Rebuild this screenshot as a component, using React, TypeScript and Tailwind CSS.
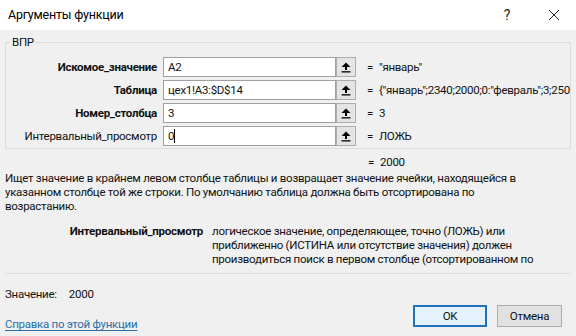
import React from "react";

const font = { fontFamily: 'Roboto, "Noto Sans", sans-serif' };

function RefIcon() {
  return (
    <svg width="10" height="11" viewBox="0 0 10 11">
      <polygon points="5,0.5 9.5,5 6,5 6,8 4,8 4,5 0.5,5" fill="#000" />
      <rect x="0.5" y="9.2" width="9" height="1.3" fill="#000" />
    </svg>
  );
}

function ArgRow({
  label,
  bold,
  value,
  result,
  cursor,
}: {
  label: string;
  bold?: boolean;
  value: string;
  result: string;
  cursor?: boolean;
}) {
  return (
    <div className="flex items-center h-[20px]">
      <div
        className={`w-[151px] text-right whitespace-nowrap ${bold ? "font-bold" : ""}`}
      >
        {label}
      </div>
      <div className="ml-[6px] w-[173px] h-[20px] border border-[#a0a0a0] bg-white flex items-center pl-[4px] whitespace-nowrap overflow-hidden">
        <span>{value}</span>
        {cursor && <span className="inline-block w-[1px] h-[14px] bg-black" />}
      </div>
      <div className="w-[20px] h-[20px] border border-[#adadad] bg-[#e4e4e4] flex items-center justify-center">
        <RefIcon />
      </div>
      <div className="ml-[11px] w-[8px]">=</div>
      <div className="ml-[4px] flex-1 min-w-0 whitespace-nowrap overflow-hidden">{result}</div>
    </div>
  );
}

export default function App() {
  return (
    <div
      className="w-[576px] h-[336px] bg-[#f0f0f0] text-[11.5px] tracking-[-0.27px] leading-[14px] text-[#111] flex flex-col overflow-hidden"
      style={font}
    >
      <div className="h-[30px] bg-white flex items-center shrink-0">
        <div className="ml-[8px] text-[12.5px] tracking-[-0.2px] leading-[18px] text-black">Аргументы функции</div>
        <div className="ml-auto text-[14px] text-[#222] mr-[38px]">?</div>
        <svg width="12" height="12" viewBox="0 0 12 12" className="mr-[16px]">
          <path d="M1 1 L11 11 M11 1 L1 11" stroke="#222" strokeWidth="1" />
        </svg>
      </div>

      <fieldset className="mt-[4px] mx-[5px] border border-[#dcdcdc] pb-[2px] pt-[7px] flex flex-col gap-[3px] min-w-0">
        <legend className="ml-[4px] px-[2px] leading-[16px]">ВПР</legend>
        <ArgRow label="Искомое_значение" bold value="A2" result={'"январь"'} />
        <ArgRow
          label="Таблица"
          bold
          value="цех1!A3:$D$14"
          result={'{"январь";2340;2000;0:"февраль";3;2500;0:"март";3500}'}
        />
        <ArgRow label="Номер_столбца" bold value="3" result="3" />
        <ArgRow label="Интервальный_просмотр" value="0" result="ЛОЖЬ" cursor />
      </fieldset>

      <div className="flex mt-[6px] h-[14px]">
        <div className="ml-[368px] w-[8px]">=</div>
        <div className="ml-[4px]">2000</div>
      </div>

      <div className="ml-[5px] mt-[2px] flex flex-col whitespace-nowrap">
        <span>Ищет значение в крайнем левом столбце таблицы и возвращает значение ячейки, находящейся в</span>
        <span>указанном столбце той же строки. По умолчанию таблица должна быть отсортирована по</span>
        <span>возрастанию.</span>
      </div>

      <div className="flex mt-[11px]">
        <div className="w-[203px] text-right font-bold whitespace-nowrap">Интервальный_просмотр</div>
        <div className="ml-[9px] flex flex-col whitespace-nowrap">
          <span>логическое значение, определяющее, точно (ЛОЖЬ) или</span>
          <span>приближенно (ИСТИНА или отсутствие значения) должен</span>
          <span>производиться поиск в первом столбце (отсортированном по</span>
        </div>
      </div>

      <div className="mx-[5px] mt-[7px] border-t border-[#dcdcdc]" />

      <div className="flex items-end justify-between mx-[5px] mt-[13px]">
        <div className="flex flex-col">
          <div className="flex">
            <span>Значение:</span>
            <span className="ml-[12px]">2000</span>
          </div>
          <a className="mt-[16px] text-[#2b6ea6] underline underline-offset-2">Справка по этой функции</a>
        </div>
        <div className="flex gap-[10px] mb-[4px] mr-[9px]">
          <div className="w-[74px] h-[22px] border-2 border-[#1f73b8] bg-[#e5f1fb] flex items-center justify-center">
            OK
          </div>
          <div className="w-[65px] h-[22px] border border-[#adadad] bg-[#e1e1e1] flex items-center justify-center">
            Отмена
          </div>
        </div>
      </div>
    </div>
  );
}
